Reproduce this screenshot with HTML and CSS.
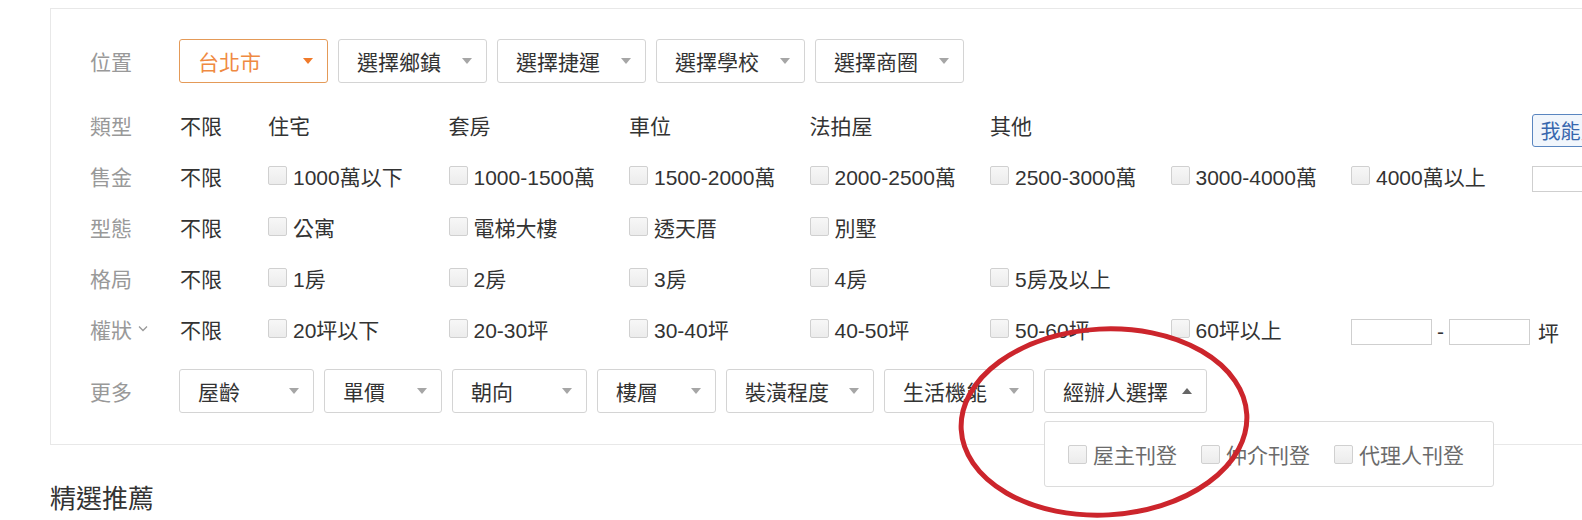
FILE: index.html
```html
<!DOCTYPE html>
<html lang="zh-Hant">
<head>
  <meta charset="UTF-8" />
  <meta name="viewport" content="width=device-width, initial-scale=1" />
  <title>搜尋條件</title>
  <link rel="stylesheet" href="styles.css">
</head>
<body>
  <div class="filter">
    <div class="row row-select">
      <span class="label">位置</span>
      <div class="selects">
        <div class="select active w149">台北市<i class="caret"></i></div>
        <div class="select w149">選擇鄉鎮<i class="caret"></i></div>
        <div class="select w149">選擇捷運<i class="caret"></i></div>
        <div class="select w149">選擇學校<i class="caret"></i></div>
        <div class="select w149">選擇商圈<i class="caret"></i></div>
      </div>
    </div>

    <div class="rows">
      <div class="row">
        <span class="label">類型</span>
        <span class="any">不限</span>
        <span class="opt">住宅</span>
        <span class="opt">套房</span>
        <span class="opt">車位</span>
        <span class="opt">法拍屋</span>
        <span class="opt">其他</span>
        <span class="opt"></span>
        <span class="opt"></span>
        <span class="opt"><button type="button" class="calc-btn">我能買多少</button></span>
      </div>
      <div class="row">
        <span class="label">售金</span>
        <span class="any">不限</span>
        <label class="opt"><i class="box"></i>1000萬以下</label>
        <label class="opt"><i class="box"></i>1000-1500萬</label>
        <label class="opt"><i class="box"></i>1500-2000萬</label>
        <label class="opt"><i class="box"></i>2000-2500萬</label>
        <label class="opt"><i class="box"></i>2500-3000萬</label>
        <label class="opt"><i class="box"></i>3000-4000萬</label>
        <label class="opt"><i class="box"></i>4000萬以上</label>
        <span class="opt"><input type="text" class="num num-low"></span>
      </div>
      <div class="row">
        <span class="label">型態</span>
        <span class="any">不限</span>
        <label class="opt"><i class="box"></i>公寓</label>
        <label class="opt"><i class="box"></i>電梯大樓</label>
        <label class="opt"><i class="box"></i>透天厝</label>
        <label class="opt"><i class="box"></i>別墅</label>
      </div>
      <div class="row">
        <span class="label">格局</span>
        <span class="any">不限</span>
        <label class="opt"><i class="box"></i>1房</label>
        <label class="opt"><i class="box"></i>2房</label>
        <label class="opt"><i class="box"></i>3房</label>
        <label class="opt"><i class="box"></i>4房</label>
        <label class="opt"><i class="box"></i>5房及以上</label>
      </div>
      <div class="row">
        <span class="label">權狀<svg class="chev" width="10" height="7" viewBox="0 0 10 7"><path d="M1 1.5l4 4 4-4" fill="none" stroke="#999" stroke-width="1.3"/></svg></span>
        <span class="any">不限</span>
        <label class="opt"><i class="box"></i>20坪以下</label>
        <label class="opt"><i class="box"></i>20-30坪</label>
        <label class="opt"><i class="box"></i>30-40坪</label>
        <label class="opt"><i class="box"></i>40-50坪</label>
        <label class="opt"><i class="box"></i>50-60坪</label>
        <label class="opt"><i class="box"></i>60坪以上</label>
        <span class="range">
          <input type="text" class="num">
          <span class="dash">-</span>
          <input type="text" class="num">
          <span class="unit">坪</span>
        </span>
      </div>
    </div>

    <div class="row row-select row-more">
      <span class="label">更多</span>
      <div class="selects">
        <div class="select w135">屋齡<i class="caret"></i></div>
        <div class="select w118">單價<i class="caret"></i></div>
        <div class="select w135">朝向<i class="caret"></i></div>
        <div class="select w119">樓層<i class="caret"></i></div>
        <div class="select w148">裝潢程度<i class="caret"></i></div>
        <div class="select w150">生活機能<i class="caret"></i></div>
        <div class="dropdown">
          <div class="select open w163">經辦人選擇<i class="caret up"></i></div>
          <div class="popup">
            <label class="pop-opt"><i class="box"></i>屋主刊登</label>
            <label class="pop-opt"><i class="box"></i>仲介刊登</label>
            <label class="pop-opt"><i class="box"></i>代理人刊登</label>
          </div>
        </div>
      </div>
    </div>
  </div>

  <h3 class="section-title">精選推薦</h3>

  <!-- hand-drawn annotation on top of the screenshot -->
  <svg class="mark" width="320" height="210" viewBox="0 0 320 210">
    <ellipse cx="154" cy="103" rx="143" ry="93" fill="none" stroke="#cc252c" stroke-width="5" transform="rotate(-3 154 103)"/>
  </svg>
</body>
</html>
```

FILE: styles.css
```css
body {
  margin: 0;
  font-family: "Liberation Sans", "Noto Sans CJK TC", sans-serif;
  font-size: 21px;
  color: #333;
  background: #fff;
  overflow: hidden;
  position: relative;
  height: 520px;
}
.filter {
  margin: 8px 0 0 50px;
  width: 1600px;
  border: 1px solid #e8e8e8;
  padding: 30px 0 31px 39px;
}
.row {
  display: flex;
  align-items: center;
  height: 51px;
}
.row-select {
  height: 44px;
}
.rows {
  margin-top: 16px;
}
.row-more {
  margin-top: 15px;
}
.label {
  width: 90px;
  flex: none;
  color: #999;
  display: flex;
  align-items: center;
}
.chev {
  margin-left: 6px;
}
.any {
  width: 88px;
  flex: none;
  color: #333;
}
.opt {
  width: 180.5px;
  flex: none;
  display: flex;
  align-items: center;
  color: #333;
  white-space: nowrap;
}
.box {
  width: 17px;
  height: 17px;
  border: 1px solid #d0d0d0;
  border-radius: 2px;
  background: linear-gradient(#f7f7f7, #ececec);
  margin-right: 6px;
  flex: none;
}
.selects {
  display: flex;
  gap: 10px;
  margin-left: -1px;
}
.select {
  box-sizing: border-box;
  height: 44px;
  border: 1px solid #d4d4d4;
  border-radius: 3px;
  background: #fff;
  padding: 0 14px 0 18px;
  display: flex;
  align-items: center;
  justify-content: space-between;
  color: #333;
  white-space: nowrap;
}
.select.active {
  border-color: #e49a58;
  color: #ef8a42;
}
.caret {
  width: 0;
  height: 0;
  border-left: 5px solid transparent;
  border-right: 5px solid transparent;
  border-top: 6px solid #a6a6a6;
}
.select.active .caret {
  border-top-color: #f07a2a;
}
.caret.up {
  border-top: none;
  border-bottom: 6px solid #666;
}
.w118 { width: 118px; }
.w119 { width: 119px; }
.w135 { width: 135px; }
.w148 { width: 148px; }
.w149 { width: 149px; }
.w150 { width: 150px; }
.w163 { width: 163px; }
.dropdown {
  position: relative;
}
.popup {
  position: absolute;
  top: 52px;
  left: 0;
  width: 450px;
  height: 66px;
  box-sizing: border-box;
  border: 1px solid #dcdcdc;
  border-radius: 3px;
  background: #fff;
  padding-left: 23px;
  display: flex;
  align-items: center;
  color: #6b6b6b;
}
.pop-opt {
  width: 133px;
  flex: none;
  display: flex;
  align-items: center;
  white-space: nowrap;
}
.calc-btn {
  margin-top: 12px;
  height: 33px;
  padding: 0 8px;
  font-family: inherit;
  font-size: 20px;
  color: #3767ae;
  background: #f1f6fc;
  border: 1px solid #5a86c0;
  border-radius: 3px;
  white-space: nowrap;
}
.num {
  box-sizing: border-box;
  width: 81px;
  height: 26px;
  border: 1px solid #cfcfcf;
  padding: 0;
  flex: none;
}
.num-low {
  margin-top: 6px;
}
.range {
  display: flex;
  align-items: center;
  margin-top: 6px;
  white-space: nowrap;
}
.dash {
  margin: 0 5px;
}
.unit {
  margin-left: 8px;
}
.section-title {
  margin: 36px 0 0 50px;
  font-size: 26px;
  font-weight: normal;
  line-height: 36px;
  color: #333;
}
.mark {
  position: absolute;
  left: 950px;
  top: 319px;
}
```
